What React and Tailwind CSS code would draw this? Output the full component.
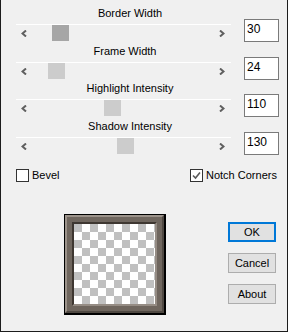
import React from 'react';

const sliders = [
  { label: 'Border Width', value: '30', thumb: 36, focused: true, top: 'mt-[6px]', labelPad: '' },
  { label: 'Frame Width', value: '24', thumb: 32, top: 'mt-[3px]', labelPad: 'pr-[10px]' },
  { label: 'Highlight Intensity', value: '110', thumb: 88, top: 'mt-[2px]', labelPad: '' },
  { label: 'Shadow Intensity', value: '130', thumb: 101, top: 'mt-[3px]', labelPad: '' },
];

const Arrow = ({ dir }) => (
  <svg width="6" height="7" viewBox="0 0 6 7" className="block">
    <polyline
      points={dir === 'left' ? '5,0.5 1.5,3.5 5,6.5' : '1,0.5 4.5,3.5 1,6.5'}
      fill="none"
      stroke="#5f5f5f"
      strokeWidth="2"
    />
  </svg>
);

const SliderGroup = ({ s }) => (
  <div className={`flex items-start h-[35px] ${s.top}`}>
    <div className="w-[215px] ml-[15px]">
      <div className={`w-[228px] h-[14px] leading-[14px] text-center ${s.labelPad}`}>{s.label}</div>
      <div className="mt-[4px] h-px bg-white" />
      <div className="relative h-[16px]">
        <div className="absolute left-[5px] top-[5px]">
          <Arrow dir="left" />
        </div>
        <div
          className={`absolute top-0 h-[16px] w-[17px] ${s.focused ? 'bg-[#a6a6a6]' : 'bg-[#cccccc]'}`}
          style={{ left: s.thumb }}
        />
        <div className="absolute left-[203px] top-[5px]">
          <Arrow dir="right" />
        </div>
      </div>
    </div>
    <div className="shrink-0 ml-[13px] mt-[13px] w-[35px] h-[23px] border border-[#7a7a7a] bg-white pl-[2px] pt-[2px] text-[12px] leading-[14px]">
      {s.value}
    </div>
  </div>
);

const Checkbox = ({ checked, label }) => (
  <div className="flex items-center gap-[3px]">
    <div className="w-[13px] h-[13px] border border-[#333333] bg-white">
      {checked && (
        <svg width="11" height="11" viewBox="0 0 11 11" className="block">
          <polyline points="2,5.5 4.5,8 9,2.5" fill="none" stroke="#5a5a5a" strokeWidth="1.6" />
        </svg>
      )}
    </div>
    <span className="text-[11px] leading-[13px]">{label}</span>
  </div>
);

const Button = ({ label, primary }) => (
  <div
    className={`w-[48px] h-[20px] flex items-center justify-center bg-[#e1e1e1] text-[11px] ${
      primary ? 'border-2 border-[#0078d7]' : 'border border-[#adadad]'
    }`}
  >
    {label}
  </div>
);

export default function App() {
  return (
    <div className="w-[288px] h-[332px] bg-[#f0f0f0] border-l border-r border-b border-[#1c1c1c] text-black text-[11px] font-['Liberation_Sans',Arial,sans-serif] overflow-hidden">
      {sliders.map((s) => (
        <SliderGroup key={s.label} s={s} />
      ))}

      {/* options */}
      <div className="flex mt-[15px] ml-[15px]">
        <div className="w-[174px]">
          <Checkbox label="Bevel" />
        </div>
        <Checkbox checked label="Notch Corners" />
      </div>

      {/* preview + buttons */}
      <div className="flex mt-[32px]">
        <div className="ml-[63px] w-[102px] h-[101px] border-t border-l border-r-2 border-b-2 border-black">
          <div className="w-full h-full border-2 border-t-[#9b928a] border-l-[#9b928a] border-b-[#4f4842] border-r-[#4f4842] bg-[#6f665e] p-[5px]">
            <div className="w-full h-full border-2 border-t-[#3e3731] border-l-[#3e3731] border-b-[#958c84] border-r-[#958c84]">
              <div className="w-full h-full bg-[conic-gradient(#ffffff_0_25%,#c0c0c0_0_50%,#ffffff_0_75%,#c0c0c0_0)] bg-[length:16px_16px]" />
            </div>
          </div>
        </div>
        <div className="ml-[62px] mt-[8px] flex flex-col gap-[11px]">
          <Button label="OK" primary />
          <Button label="Cancel" />
          <Button label="About" />
        </div>
      </div>
    </div>
  );
}
